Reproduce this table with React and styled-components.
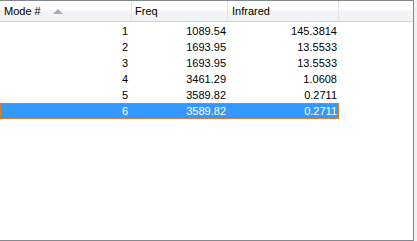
import styled, { createGlobalStyle } from 'styled-components'

const GlobalStyle = createGlobalStyle`
  html, body {
    margin: 0;
    padding: 0;
    background: #f0f0f0;
  }
  body {
    font-family: "Liberation Sans", Arial, sans-serif;
    font-size: 11px;
  }
`

const ListView = styled.div`
  width: 413px;
  height: 239px;
  background: #ffffff;
  border-top: 1px solid #828790;
  border-right: 1px solid #828790;
  border-bottom: 1px solid #828790;
  display: flex;
  flex-direction: column;
  overflow: hidden;
  color: #000;
`

const Header = styled.div`
  display: flex;
  height: 20px;
  background: linear-gradient(#ffffff 0%, #ffffff 45%, #f3f4f6 50%, #f1f2f4 100%);
  border-bottom: 1px solid #d5d5d5;
`

const HeaderCell = styled.div`
  width: ${p => p.$w}px;
  flex: ${p => (p.$fill ? '1' : 'none')};
  border-right: ${p => (p.$fill ? 'none' : '1px solid #e3e5e8')};
  display: flex;
  align-items: center;
  padding-left: ${p => p.$pad}px;
  box-sizing: border-box;
  position: relative;
`

const SortArrow = styled.span`
  position: absolute;
  left: 53px;
  top: 8px;
  width: 0;
  height: 0;
  border-left: 5px solid transparent;
  border-right: 5px solid transparent;
  border-bottom: 5px solid #a8abb0;
`

const Body = styled.div`
  display: flex;
  flex-direction: column;
  padding-top: 1px;
`

const Row = styled.div`
  display: flex;
  width: 339px;
  height: 16px;
  box-sizing: border-box;
  background: ${p => (p.$selected ? '#3399ff' : 'transparent')};
  color: ${p => (p.$selected ? '#ffffff' : '#000000')};
  border: 1px dotted ${p => (p.$selected ? '#e0842c' : 'transparent')};
`

const Cell = styled.div`
  width: ${p => p.$w}px;
  text-align: right;
  padding-right: ${p => p.$pad}px;
  box-sizing: border-box;
  line-height: 14px;
`

const rows = [
  ['1', '1089.54', '145.3814'],
  ['2', '1693.95', '13.5533'],
  ['3', '1693.95', '13.5533'],
  ['4', '3461.29', '1.0608'],
  ['5', '3589.82', '0.2711'],
  ['6', '3589.82', '0.2711'],
]

export default function App() {
  return (
    <>
      <GlobalStyle />
      <ListView>
        <Header>
          <HeaderCell $w={132} $pad={4}>
            Mode #
            <SortArrow />
          </HeaderCell>
          <HeaderCell $w={96} $pad={3}>Freq</HeaderCell>
          <HeaderCell $w={111} $pad={4}>Infrared</HeaderCell>
          <HeaderCell $fill $pad={0} />
        </Header>
        <Body>
          {rows.map((r, i) => (
            <Row key={i} $selected={i === 5}>
              <Cell $w={131} $pad={4}>{r[0]}</Cell>
              <Cell $w={96} $pad={2}>{r[1]}</Cell>
              <Cell $w={110} $pad={1}>{r[2]}</Cell>
            </Row>
          ))}
        </Body>
      </ListView>
    </>
  )
}
